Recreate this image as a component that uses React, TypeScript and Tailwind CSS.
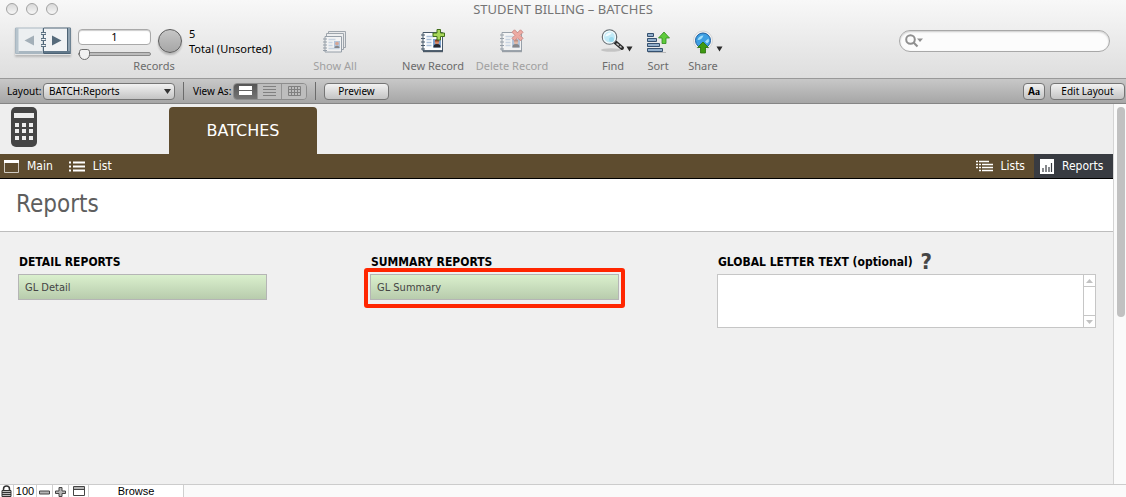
import { useState } from "react";
import type { ReactNode } from "react";

type ViewMode = "form" | "list" | "table";

function ToolButton({ label, className, disabled, menu, children }: {
  label: string;
  className: string;
  disabled?: boolean;
  menu?: boolean;
  children: ReactNode;
}) {
  return (
    <button type="button" disabled={disabled} className={`relative flex flex-col items-center shrink-0 ${className}`}>
      <span className={`flex h-10 items-center pt-2 ${disabled ? "opacity-50" : ""}`}>{children}</span>
      <span className={`text-[11px] leading-4 whitespace-nowrap ${disabled ? "text-[#a0a0a0]" : "text-[#6b6b6b]"}`}>{label}</span>
      {menu && (
        <svg className="absolute right-0 top-7" width="7" height="6" viewBox="0 0 7 6">
          <path d="M0.500 0.500h6L3.500 5.500z" fill="#2b2b2b" />
        </svg>
      )}
    </button>
  );
}

function RecordCard() {
  return (
    <>
      <path d="M3 5h20v19H3z" fill="#00000022" />
      <path d="M3 3.500h19.500v18.500H3z" fill="#fbfcfd" stroke="#46586a" />
      <path d="M3 22h20" stroke="#37485a" strokeWidth="1.500" />
      <path d="M1 6h4M1 9.500h4M1 13h4M1 16.500h4M1 20h4" stroke="#46586a" strokeWidth="1.200" />
      <path d="M6.500 7.500h8M6.500 10.500h5M6.500 13.500h5M6.500 16.500h5" stroke="#a9bfda" strokeWidth="1.600" />
      <path d="M13 10h8v8.500h-8z" fill="#7da2cf" />
      <path d="M13.500 18.500c0-3 1.500-3.500 3.500-3.500s3.500 0.500 3.500 3.500z" fill="#26262e" />
      <circle cx="17" cy="13" r="2.200" fill="#d98662" />
      <path d="M14.800 12.500c0-3 4.400-3 4.400 0z" fill="#8d3a20" />
    </>
  );
}

function NewRecordIcon() {
  return (
    <svg width="26" height="26" viewBox="0 0 26 26">
      <RecordCard />
      <path d="M16 0.500h3.500v3.500h4v3.500h-4v3.500H16V7.500h-4V4h4z" fill="#a8d65a" stroke="#41701b" transform="translate(1 0)" />
    </svg>
  );
}

function DeleteRecordIcon() {
  return (
    <svg width="26" height="26" viewBox="0 0 26 26">
      <RecordCard />
      <path d="M15.500 0.800l3 3 3-3 2.500 2.500-3 3 3 3-2.500 2.500-3-3-3 3-2.500-2.500 3-3-3-3z" fill="#ef6a5c" stroke="#a92f25" />
    </svg>
  );
}

function ShowAllIcon() {
  return (
    <svg width="26" height="26" viewBox="0 0 26 26">
      <path d="M6.500 2.500h17v16h-17z" fill="#e4e7ea" stroke="#54616e" />
      <path d="M4.500 4.500h17v16h-17z" fill="#f0f2f4" stroke="#54616e" />
      <path d="M3 7.500h16.500v15.500H3z" fill="#fbfcfd" stroke="#46586a" />
      <path d="M1 10h4M1 13h4M1 16h4M1 19h4M1 21.500h4" stroke="#46586a" />
      <path d="M6.500 10.500h7M6.500 13.500h4M6.500 16.500h4M6.500 19.500h11" stroke="#a9bfda" strokeWidth="1.400" />
      <path d="M12 12h6v7h-6z" fill="#7da2cf" />
      <circle cx="15" cy="14.500" r="1.800" fill="#c7643f" />
      <path d="M12.500 19c0-3 5-3 5 0z" fill="#26262e" />
    </svg>
  );
}

function FindIcon() {
  return (
    <svg width="26" height="26" viewBox="0 0 26 26">
      <ellipse cx="11" cy="21" rx="10" ry="1.800" fill="#00000026" />
      <path d="M15 13l7 6" stroke="#2b2b2b" strokeWidth="4" strokeLinecap="round" />
      <path d="M16.500 14.500l5 4" stroke="#c6c6c6" strokeWidth="1.500" strokeDasharray="3 1" />
      <circle cx="9.500" cy="8" r="7.200" fill="#c1eaf7" stroke="#6a6f73" strokeWidth="1.200" />
      <circle cx="9.500" cy="8" r="6" fill="none" stroke="#f4fbfd" strokeWidth="1.200" />
      <path d="M5 7.500c1-3.500 4-4.500 7-4-1 2-3 3.500-7 4z" fill="#f3fcff" />
      <circle cx="11.500" cy="10.500" r="2.500" fill="#9adcf0" />
    </svg>
  );
}

function SortIcon() {
  return (
    <svg width="26" height="26" viewBox="0 0 26 26">
      <g fill="#91aecb" stroke="#35506f">
        <path d="M2.500 4.500h6v3h-6z" />
        <path d="M2.500 9.500h9v3h-9z" />
        <path d="M2.500 14.500h12v3h-12z" />
        <path d="M2.500 19.500h15v3h-15z" />
      </g>
      <path d="M3 23.500h18" stroke="#00000033" />
      <path d="M19 3l5.500 6h-3.500v5.500h-4V9h-3.500z" fill="#5fcb3c" stroke="#2f8a1c" strokeWidth="0.800" />
    </svg>
  );
}

function ShareIcon() {
  return (
    <svg width="26" height="26" viewBox="0 0 26 26">
      <circle cx="13" cy="11.500" r="9.500" fill="#f3f3f3" stroke="#c9c9c9" strokeWidth="0.700" />
      <circle cx="13" cy="11.500" r="7.500" fill="#3d9fe2" stroke="#1f5e9f" />
      <path d="M7.500 11c1-3 3-4.500 6-4.500-1 2.500-2.500 4.500-6 4.500zM15 12.500l3.500-3 0.500 3-2 2z" fill="#a5e0fb" />
      <path d="M13 13l5.500 5.500h-3V24h-5v-5.500h-3z" fill="#3f9a12" stroke="#2a6f0b" strokeWidth="0.800" />
    </svg>
  );
}

function CalculatorIcon() {
  return (
    <svg width="26" height="40" viewBox="0 0 26 40" role="img" aria-label="Calculator">
      <rect width="26" height="40" rx="5" fill="#454545" />
      <path d="M3 6h20v5H3z" fill="#eeeeee" />
      <g fill="#eeeeee">
        <path d="M4 16h4v4H4zM11 16h4v4h-4zM18 16h4v4h-4z" />
        <path d="M4 22h4v4H4zM11 22h4v4h-4zM18 22h4v4h-4z" />
        <path d="M4 29h4v4H4zM11 29h4v4h-4zM18 29h4v4h-4z" />
      </g>
    </svg>
  );
}

function Book() {
  return (
    <div className="flex h-7 w-14 shrink-0 shadow-[0_2px_2px_#00000033]">
      <button type="button" aria-label="Previous record" disabled className="w-7">
        <svg width="28" height="28" viewBox="0 0 28 28">
          <path d="M0.500 1h27.500v25.500H0.500z" fill="#eceff1" stroke="#a9b7c1" />
          <path d="M1 1h2.500v25H1z" fill="#b7c4cd" />
          <path d="M3.500 25h24" stroke="#a9b7c1" strokeWidth="2" />
          <path d="M19 8.500v10L9.500 13.500z" fill="#a3afb8" />
        </svg>
      </button>
      <button type="button" aria-label="Next record" className="w-7">
        <svg width="28" height="28" viewBox="0 0 28 28" overflow="visible">
          <path d="M0.500 1h27v25.500h-27z" fill="#f1f3f5" stroke="#4d6375" />
          <path d="M24.500 1h3v25h-3z" fill="#8fa2b1" />
          <path d="M24.500 1v24" stroke="#4d6375" />
          <path d="M1 25h26" stroke="#61788a" strokeWidth="2" />
          <path d="M9 8.500v10l9.500-5z" fill="#566b7c" />
          <path d="M-2 6.500h5M-2 12.500h5M-2 18.500h5" stroke="#5c7182" strokeWidth="3" />
          <path d="M-1.500 6.500h4M-1.500 12.500h4M-1.500 18.500h4" stroke="#f4f6f7" />
        </svg>
      </button>
    </div>
  );
}

function TitleBar() {
  return (
    <div className="grid grid-cols-[1fr_auto_1fr] items-center h-[18px] px-1.5">
      <div className="flex gap-2">
        {["Close", "Minimize", "Zoom"].map((name) => (
          <button
            key={name}
            type="button"
            aria-label={name}
            className="size-3 rounded-full border border-[#a3a3a3] bg-linear-to-b from-[#d9d9d9] to-[#f6f6f6]"
          />
        ))}
      </div>
      <h1 className="text-[13px] leading-[18px] text-[#757575]">STUDENT BILLING – BATCHES</h1>
    </div>
  );
}

function Toolbar() {
  return (
    <div className="flex h-[60px] pl-[15px] pr-4">
      <div className="w-[278px] shrink-0">
        <div className="flex h-10 items-center pt-1.5">
          <Book />
          <div className="ml-[7px] flex w-[73px] flex-col pt-1.5">
            <input
              aria-label="Current record"
              defaultValue="1"
              className="h-4 w-full rounded-[4px] border border-[#a9a9a9] bg-white text-center text-[11px] leading-[14px] shadow-[inset_0_1px_1px_#00000033] outline-none"
            />
            <input
              type="range"
              aria-label="Record position"
              min={1}
              max={5}
              defaultValue={1}
              className="mt-[3px] h-3 w-full appearance-none bg-transparent [&::-webkit-slider-runnable-track]:h-1 [&::-webkit-slider-runnable-track]:rounded-full [&::-webkit-slider-runnable-track]:border [&::-webkit-slider-runnable-track]:border-[#8a8a8a] [&::-webkit-slider-runnable-track]:bg-[#bdbdbd] [&::-webkit-slider-thumb]:-mt-1 [&::-webkit-slider-thumb]:h-[11px] [&::-webkit-slider-thumb]:w-[11px] [&::-webkit-slider-thumb]:appearance-none [&::-webkit-slider-thumb]:rounded-t-[3px] [&::-webkit-slider-thumb]:rounded-b-[6px] [&::-webkit-slider-thumb]:border [&::-webkit-slider-thumb]:border-[#6f6f6f] [&::-webkit-slider-thumb]:bg-[#f2f2f2]"
            />
          </div>
          <button
            type="button"
            aria-label="Found set"
            className="ml-[7px] size-6 shrink-0 rounded-full border border-[#5c5c5c] bg-linear-to-b from-[#c6c6c6] to-[#a6a6a6] shadow-[0_2px_2px_#00000033]"
          />
          <div className="ml-[7px] text-[11px] leading-[15px] whitespace-nowrap text-black">
            <p>5</p>
            <p>Total (Unsorted)</p>
          </div>
        </div>
        <p className="text-center text-[11px] leading-4 text-[#6b6b6b]">Records</p>
      </div>

      <ToolButton label="Show All" className="ml-[17px] w-[50px]" disabled><ShowAllIcon /></ToolButton>
      <ToolButton label="New Record" className="ml-[38px] w-[70px]"><NewRecordIcon /></ToolButton>
      <ToolButton label="Delete Record" className="ml-1 w-20" disabled><DeleteRecordIcon /></ToolButton>
      <ToolButton label="Find" className="ml-[41px] w-10" menu><FindIcon /></ToolButton>
      <ToolButton label="Sort" className="ml-[5px] w-10"><SortIcon /></ToolButton>
      <ToolButton label="Share" className="ml-[5px] w-10" menu><ShareIcon /></ToolButton>

      <label className="ml-auto mt-3 flex h-[22px] w-[211px] items-center rounded-full border border-[#a8a8a8] bg-[#fcfcfc] pl-[5px] pr-3 shadow-[inset_0_1px_2px_#00000033]">
        <svg width="18" height="14" viewBox="0 0 18 14" className="shrink-0">
          <circle cx="5.500" cy="5.500" r="4.300" fill="none" stroke="#8f8f8f" strokeWidth="2" />
          <path d="M8.500 8.500l4 4" stroke="#8f8f8f" strokeWidth="2.200" />
          <path d="M12 4.500h6l-3 3.500z" fill="#8f8f8f" />
        </svg>
        <input type="search" aria-label="Quick find" className="min-w-0 flex-1 bg-transparent text-[12px] outline-none" />
      </label>
    </div>
  );
}

function LayoutBar() {
  const [view, setView] = useState<ViewMode>("form");
  const pushButton = "h-[17px] rounded-[4px] border border-[#757575] bg-linear-to-b from-[#f2f2f2] to-[#c4c4c4] text-[10px] leading-[15px] whitespace-nowrap";

  const views: { id: ViewMode; icon: ReactNode }[] = [
    { id: "form", icon: <path d="M1 1h13v4H1zM1 6h13v4H1z" fill="currentColor" /> },
    { id: "list", icon: <path d="M1 1.500h13M1 4.500h13M1 7.500h13M1 10.500h13" stroke="currentColor" /> },
    { id: "table", icon: <path d="M1.500 1.500h12v9h-12zM1.500 4.500h12M1.500 7.500h12M4.500 1.500v9M7.500 1.500v9M10.500 1.500v9" fill="none" stroke="currentColor" /> },
  ];

  return (
    <div className="flex h-[26px] items-center border-t border-b border-t-[#999999] border-b-[#858585] bg-linear-to-b from-[#c8c8c8] to-[#a6a6a6] pl-[7px] pr-px text-[10px] text-black">
      <label htmlFor="layout" className="w-9 whitespace-nowrap">Layout:</label>
      <div className="relative">
        <select id="layout" className={`block w-[132px] appearance-none pl-[5px] ${pushButton}`}>
          <option>BATCH:Reports</option>
        </select>
        <svg className="pointer-events-none absolute right-1 top-1.5" width="7" height="5" viewBox="0 0 7 5">
          <path d="M0 0h7L3.500 5z" fill="#333333" />
        </svg>
      </div>
      <span className="ml-2 h-[18px] w-px bg-[#6b6b6b]" />
      <span className="ml-[9px] w-10 whitespace-nowrap">View As:</span>
      <div className="flex h-[17px] overflow-hidden rounded-[4px] border border-[#8d8d8d]">
        {views.map((v) => (
          <button
            key={v.id}
            type="button"
            aria-label={`View as ${v.id}`}
            aria-pressed={view === v.id}
            onClick={() => setView(v.id)}
            className={`flex w-6 items-center justify-center border-r border-[#949494] last:border-r-0 ${
              view === v.id ? "bg-linear-to-b from-[#565656] to-[#757575] text-white" : "bg-[#bdbdbd] text-[#808080]"
            }`}
          >
            <svg width="15" height="12" viewBox="0 0 15 12">{v.icon}</svg>
          </button>
        ))}
      </div>
      <span className="ml-2 h-[18px] w-px bg-[#6b6b6b]" />
      <button type="button" className={`ml-2 w-[65px] ${pushButton}`}>Preview</button>
      <button type="button" aria-label="Formatting bar" className={`ml-auto w-[22px] ${pushButton}`}>
        <b>A</b><span className="font-['Liberation_Serif',serif] font-bold">a</span>
      </button>
      <button type="button" className={`ml-[5px] w-[75px] ${pushButton}`}>Edit Layout</button>
    </div>
  );
}

function NavBar() {
  return (
    <nav className="flex h-[25px] border-b border-black bg-[#5e4c2f] text-[12px] leading-6 text-white">
      <a href="#main" className="flex items-center gap-2 pl-1">
        <svg width="15" height="13" viewBox="0 0 15 13">
          <path d="M0.500 0.500h14v12H0.500z" fill="none" stroke="#cfc9bf" />
          <path d="M0 0h15v3H0z" fill="#ffffff" />
        </svg>
        Main
      </a>
      <a href="#list" className="ml-4 flex items-center gap-2">
        <svg width="16" height="11" viewBox="0 0 16 11">
          <path d="M0 1.500h2M0 5.500h2M0 9.500h2M4 1.500h12M4 5.500h12M4 9.500h12" stroke="#ffffff" strokeWidth="2" />
        </svg>
        List
      </a>
      <a href="#lists" className="ml-auto mr-[9px] flex items-center gap-2">
        <svg width="17" height="13" viewBox="0 0 17 13">
          <path d="M0 1.500h2M3 1.500h10M0 4.500h2M0 7.500h2M3 4.500h2M3 7.500h2M3 10.500h2M6 4.500h11M6 7.500h11M6 10.500h11" stroke="#ffffff" strokeWidth="1.500" />
        </svg>
        Lists
      </a>
      <a href="#reports" className="flex w-[79px] items-center gap-2 bg-[#383b41] pl-1.5">
        <svg width="14" height="15" viewBox="0 0 14 15">
          <path d="M0 0h14v15H0z" fill="#ffffff" />
          <path d="M3 9v4M6 6v7M9 8v5M11.500 4v9" stroke="#383b41" strokeWidth="1.200" />
        </svg>
        Reports
      </a>
    </nav>
  );
}

function ReportButton({ children }: { children: ReactNode }) {
  return (
    <button
      type="button"
      className="block h-[26px] w-full border border-[#b5b5b5] bg-linear-to-b from-[#daf0cd] to-[#b8ccad] pl-1.5 text-left text-[11px] leading-[26px] text-[#444444]"
    >
      {children}
    </button>
  );
}

function ReportsBody() {
  const heading = "pl-px h-[22px] text-[12px] leading-5 font-bold text-black whitespace-nowrap";

  return (
    <div className="grid flex-1 grid-cols-[352fr_347fr_379fr] content-start bg-[#f0f0f0] pl-[18px] pr-[17px] pt-5">
      <section>
        <h3 className={heading}>DETAIL REPORTS</h3>
        <div className="w-[249px]">
          <ReportButton>GL Detail</ReportButton>
        </div>
      </section>

      <section>
        <h3 className={heading}>SUMMARY REPORTS</h3>
        <div className="relative w-[249px]">
          <ReportButton>GL Summary</ReportButton>
          {/* highlight around the report to run */}
          <div className="pointer-events-none absolute -inset-x-1.5 -top-1.5 -bottom-2 rounded-[3px] border-4 border-[#ff2600]" />
        </div>
      </section>

      <section>
        <div className="flex gap-2">
          <label htmlFor="letter-text" className={heading}>GLOBAL LETTER TEXT (optional)</label>
          <button type="button" aria-label="Help" className="h-5 text-[22px] leading-5 font-bold text-[#454545]">?</button>
        </div>
        <div className="flex h-[54px] border border-[#c6c6c6] bg-white">
          <textarea id="letter-text" className="min-w-0 flex-1 resize-none p-1 text-[11px] outline-none" />
          <div className="flex w-3 flex-col justify-between border-l border-[#c6c6c6]">
            <button type="button" aria-label="Scroll up" className="flex h-3 items-center justify-center border-b border-[#c6c6c6]">
              <svg width="7" height="4" viewBox="0 0 7 4"><path d="M0 4h7L3.500 0z" fill="#c2c2c2" /></svg>
            </button>
            <button type="button" aria-label="Scroll down" className="flex h-3 items-center justify-center border-t border-[#c6c6c6]">
              <svg width="7" height="4" viewBox="0 0 7 4"><path d="M0 0h7L3.500 4z" fill="#c2c2c2" /></svg>
            </button>
          </div>
        </div>
      </section>
    </div>
  );
}

function StatusBar() {
  const cell = "flex shrink-0 items-center justify-center border-r border-[#cfcfcf] bg-white";

  return (
    <footer className="border-t border-[#cccccc] bg-[#fafafa] font-['Liberation_Sans',Arial,sans-serif] text-[11px] leading-3 text-black">
      <div className="flex h-3 w-[184px]">
        <span className={`w-3.5 ${cell}`}>
          <svg width="11" height="12" viewBox="0 0 11 12">
            <path d="M2.500 6V4c0-4 6-4 6 0v2" fill="none" stroke="#333333" strokeWidth="1.500" />
            <path d="M1 5.500h9v6H1z" fill="#bdbdbd" stroke="#333333" />
            <path d="M1 7.500h9M1 9.500h9" stroke="#333333" />
          </svg>
        </span>
        <span className={`w-[23px] ${cell}`}>100</span>
        <button type="button" aria-label="Zoom out" className={`w-4 ${cell}`}>
          <svg width="11" height="11" viewBox="0 0 11 11"><path d="M0.500 5h10v3h-10z" fill="#b5b5b5" stroke="#444444" /></svg>
        </button>
        <button type="button" aria-label="Zoom in" className={`w-4 ${cell}`}>
          <svg width="11" height="11" viewBox="0 0 11 11"><path d="M4 1.500h3V5h3.500v2.500H7v3H4v-3H0.500V5H4z" fill="#b5b5b5" stroke="#444444" /></svg>
        </button>
        <button type="button" aria-label="Toggle status toolbar" className={`w-5 ${cell}`}>
          <svg width="12" height="10" viewBox="0 0 12 10">
            <path d="M0.500 0.500h11v9H0.500z" fill="#ffffff" stroke="#444444" />
            <path d="M1 1h10v2H1z" fill="#b5b5b5" />
            <path d="M1 3.500h10" stroke="#444444" />
          </svg>
        </button>
        <button type="button" className={`flex-1 ${cell}`}>Browse</button>
      </div>
    </footer>
  );
}

export default function App() {
  return (
    <div className="flex min-h-screen flex-col bg-white font-['Noto_Sans','Lucida_Grande',sans-serif]">
      <header className="shrink-0">
        <div className="bg-linear-to-b from-[#f8f8f8] to-[#dedede]">
          <TitleBar />
          <Toolbar />
        </div>
        <LayoutBar />
      </header>

      <div className="flex flex-1 font-['DejaVu_Sans_Condensed',Tahoma,sans-serif]">
        <main className="flex min-w-0 flex-1 flex-col">
          <div className="flex bg-[#eeeeee] pl-[11px] pt-[3px]">
            <CalculatorIcon />
            <h2 className="ml-[132px] h-[47px] w-[148px] rounded-t-[4px] bg-[#5e4c2f] text-center font-['DejaVu_Sans',sans-serif] text-[16px] leading-[48px] text-white">BATCHES</h2>
          </div>
          <NavBar />
          <h2 className="h-[53px] border-b border-[#bdbdbd] pl-4 text-[24px] leading-[50px] text-[#5e5e5e]">Reports</h2>
          <ReportsBody />
        </main>
        <div className="flex w-[13px] shrink-0 justify-end border-l border-[#d4d4d4] bg-[#fafafa] pr-px pt-[3px]">
          <div className="h-[210px] w-2 rounded-full bg-[#c1c1c1]" />
        </div>
      </div>

      <StatusBar />
    </div>
  );
}
